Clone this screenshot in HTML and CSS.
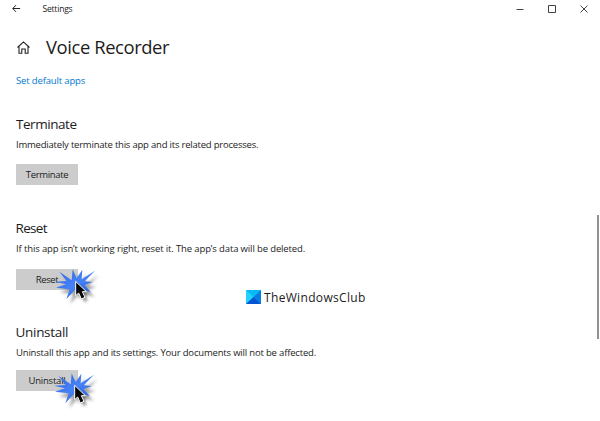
FILE: index.html
```
<!DOCTYPE html>
<html lang="en">
<head>
<meta charset="utf-8">
<title>Settings</title>
<link rel="stylesheet" href="styles.css">
</head>
<body>
<svg class="defs" width="0" height="0" aria-hidden="true">
  <defs>
    <linearGradient id="blue" x1="0" y1="0" x2="1" y2="1"><stop offset="0" stop-color="#2a62e8"/><stop offset=".5" stop-color="#4682f7"/><stop offset="1" stop-color="#2358dc"/></linearGradient>
    <filter id="soft" x="-30%" y="-30%" width="180%" height="180%"><feGaussianBlur stdDeviation="4"/></filter>
    <symbol id="click" viewBox="0 0 150 135">
      <path d="M28 20L65 46L68 13L80 40L97 14L95 43L135 17L104 49L128 51L104 60L122 82L96 73L94 92L75 74L49 103L59 73L18 68L48 58L15 50L50 48Z" transform="translate(11 14)" fill="#444" opacity=".5" filter="url(#soft)"/>
      <path d="M28 20L65 46L68 13L80 40L97 14L95 43L135 17L104 49L128 51L104 60L122 82L96 73L94 92L75 74L49 103L59 73L18 68L48 58L15 50L50 48Z" fill="url(#blue)"/>
      <path d="M78 50V91L87 83L95 101L104 97L96 80H107Z" transform="translate(9 10)" fill="#333" opacity=".5" filter="url(#soft)"/>
      <path d="M77 49V92L86 84L94 102L105 97L97 80H109Z" fill="#050505" stroke="#fff" stroke-width="3"/>
    </symbol>
  </defs>
</svg>
<header class="titlebar">
  <svg class="back" viewBox="0 0 10 10"><path d="M9 5H1M4.5 1.2L.8 5l3.7 3.8"/></svg>
  <span class="caption">Settings</span>
  <div class="controls">
    <svg viewBox="0 0 8 8"><path d="M.5 4.5h7"/></svg>
    <svg viewBox="0 0 8 8"><path d="M.5 .5h7v7h-7z"/></svg>
    <svg viewBox="0 0 8 8"><path d="M.5 .5l7 7m0-7l-7 7"/></svg>
  </div>
</header>
<main>
  <div class="heading">
    <svg class="home" viewBox="0 0 13 13"><path d="M.5 6.5L6.5 .9l6 5.6M2 5.4v6.9h2.8V8h3.4v4.3H11V5.4"/></svg>
    <h1>Voice Recorder</h1>
  </div>
  <a class="link">Set default apps</a>
  <section class="terminate">
    <h2>Terminate</h2>
    <p>Immediately terminate this app and its related processes.</p>
    <button>Terminate</button>
  </section>
  <section class="reset">
    <h2>Reset</h2>
    <p>If this app isn’t working right, reset it. The app’s data will be deleted.</p>
    <button>Reset<svg class="burst"><use href="#click"/></svg></button>
  </section>
  <section class="uninstall">
    <h2>Uninstall</h2>
    <p>Uninstall this app and its settings. Your documents will not be affected.</p>
    <button>Uninstall<svg class="burst"><use href="#click"/></svg></button>
  </section>
</main>
<div class="watermark">
  <svg viewBox="0 0 15 14"><path fill="#08b9f5" d="M0 0h15v14H0z"/><path fill="#23d3ff" d="M0 0L7.5 7L0 14z"/><path fill="#087de4" d="M15 0v14L7.5 7z"/><path fill="#0755d1" d="M0 14L7.5 7L15 14z"/></svg>
  <span>TheWindowsClub</span>
</div>
<div class="scrollbar"></div>
</body>
</html>
```
FILE: styles.css
```
* { box-sizing: border-box; }
body {
  margin: 0;
  width: 600px;
  height: 421px;
  overflow: hidden;
  position: relative;
  background: #fff;
  color: #1c1c1c;
  font-family: "Open Sans", "Noto Sans", sans-serif;
  font-size: 9.5px;
}
.defs { position: absolute; }
svg { flex: none; fill: none; }
.titlebar { display: flex; align-items: center; height: 17px; padding: 0 12px 0 12px; }
.back { width: 9px; height: 9px; stroke: #222; stroke-width: 1.1; }
.caption { margin-left: 21.5px; font-size: 8.5px; line-height: 17px; letter-spacing: -.2px; }
.controls { display: flex; gap: 24px; margin-left: auto; }
.controls svg { width: 8px; height: 8px; stroke: #444; stroke-width: 1; }
main { padding: 15px 16px 0; }
.heading { display: flex; align-items: center; height: 30px; }
.home { width: 13px; height: 13px; margin-left: 1px; stroke: #222; stroke-width: 1.1; }
h1 { margin: 0 0 0 16px; font-size: 18.4px; font-weight: 400; line-height: 30px; letter-spacing: -.4px; white-space: nowrap; }
.link { display: block; margin-top: 12px; height: 14px; line-height: 14px; color: #0078d0; letter-spacing: -.15px; }
section { height: 104px; }
.terminate { margin-top: 26px; }
h2 { margin: 0; font-size: 13.5px; font-weight: 400; line-height: 20px; letter-spacing: -.45px; }
.reset h2 { margin-left: -.5px; letter-spacing: -.7px; }
.uninstall h2 { margin-left: -.5px; letter-spacing: -.3px; }
p { margin: 4px 0 0; line-height: 14px; letter-spacing: -.21px; white-space: nowrap; }
.reset p { letter-spacing: -.13px; }
.uninstall p { letter-spacing: -.18px; }
button {
  position: relative;
  display: flex;
  align-items: center;
  justify-content: center;
  width: 62px;
  height: 21px;
  margin: 12px 0 0;
  padding: 0;
  border: 0;
  background: #ccc;
  color: #1c1c1c;
  font: inherit;
  letter-spacing: -.35px;
}
.reset button { margin-top: 13px; }
.uninstall button { margin-top: 10px; letter-spacing: -.2px; }
.burst { position: absolute; left: 34px; top: -4px; width: 50px; height: 45px; overflow: visible; }
.uninstall .burst { left: 33px; top: -1px; }
.watermark { position: absolute; left: 246px; top: 288px; display: flex; align-items: center; height: 18px; font-size: 12px; letter-spacing: .33px; gap: 3px; }
.watermark svg { width: 15px; height: 14px; }
.scrollbar { position: absolute; left: 597px; top: 215px; width: 2px; height: 124px; background: #929292; }
```
